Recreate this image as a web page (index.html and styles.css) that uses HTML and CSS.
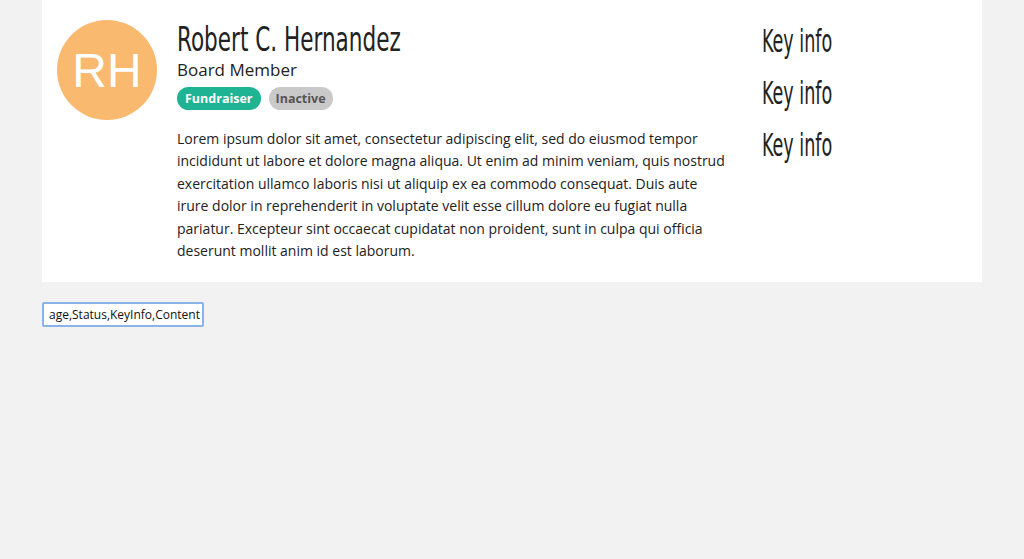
FILE: index.html
```html
<!DOCTYPE html>
<html>
<head>
<meta charset="utf-8">
<link rel="stylesheet" href="styles.css">
</head>
<body>
<div class="page">
  <div class="card">
    <div class="avatar">RH</div>
    <div class="main">
      <h1 class="name"><span class="narrow">Robert C. Hernandez</span></h1>
      <div class="role">Board Member</div>
      <div class="badges">
        <span class="badge badge-green">Fundraiser</span>
        <span class="badge badge-grey">Inactive</span>
      </div>
      <p class="content">Lorem ipsum dolor sit amet, consectetur adipiscing elit, sed do eiusmod tempor incididunt ut labore et dolore magna aliqua. Ut enim ad minim veniam, quis nostrud exercitation ullamco laboris nisi ut aliquip ex ea commodo consequat. Duis aute irure dolor in reprehenderit in voluptate velit esse cillum dolore eu fugiat nulla pariatur. Excepteur sint occaecat cupidatat non proident, sunt in culpa qui officia deserunt mollit anim id est laborum.</p>
    </div>
    <div class="keyinfo">
      <div class="key"><span class="narrow">Key info</span></div>
      <div class="key"><span class="narrow">Key info</span></div>
      <div class="key"><span class="narrow">Key info</span></div>
    </div>
  </div>
  <div class="fields">age,Status,KeyInfo,Content</div>
</div>
</body>
</html>
```
FILE: styles.css
```css
html, body {
  margin: 0;
  padding: 0;
  background: #f2f2f2;
}
.page {
  padding: 0 42px;
  font-family: "Open Sans", "Liberation Sans", sans-serif;
  color: #222;
}
.card {
  width: 940px;
  box-sizing: border-box;
  background: #fff;
  display: flex;
  padding: 20px 15px 20px 15px;
}
.avatar {
  flex: none;
  width: 100px;
  height: 100px;
  border-radius: 50%;
  background: #f9b96f;
  color: #fff;
  font-family: "Liberation Sans", Arial, sans-serif;
  font-size: 48px;
  display: flex;
  align-items: center;
  justify-content: center;
  margin-right: 20px;
}
.main {
  flex: none;
  width: 552px;
}
.narrow {
  display: inline-block;
  transform-origin: left center;
  white-space: nowrap;
}
.name {
  margin: -3px 0 0 0;
  font-family: "DejaVu Sans Condensed", "DejaVu Sans", sans-serif;
  font-weight: normal;
  font-size: 34px;
  line-height: 44px;
  color: #222;
}
.name .narrow {
  transform: scaleX(0.705);
}
.role {
  font-size: 17px;
  line-height: 22px;
  margin-top: -2px;
}
.badges {
  display: flex;
  gap: 8px;
  margin-top: 6px;
}
.badge {
  font-size: 12.5px;
  font-weight: bold;
  line-height: 23px;
  height: 23px;
  padding: 0 8px;
  border-radius: 12px;
}
.badge-green {
  background: #1eb393;
  color: #fff;
}
.badge-grey {
  background: #c9c9c9;
  color: #555;
  padding: 0 7px;
}
.content {
  margin: 18px 0 0 0;
  font-size: 14px;
  line-height: 22.4px;
  color: #222;
}
.keyinfo {
  margin-left: 33px;
  display: flex;
  flex-direction: column;
  gap: 14px;
  padding-top: 2px;
}
.key {
  font-family: "DejaVu Sans Condensed", "DejaVu Sans", sans-serif;
  font-size: 32px;
  line-height: 38px;
  color: #222;
}
.key .narrow {
  transform: scaleX(0.61);
}
.fields {
  margin-top: 20px;
  width: fit-content;
  height: 25px;
  box-sizing: border-box;
  border: 2px solid #8cb3e6;
  border-radius: 2px;
  background: #fff;
  font-size: 12px;
  line-height: 21px;
  padding: 0 2px 0 5px;
  color: #111;
}
```
